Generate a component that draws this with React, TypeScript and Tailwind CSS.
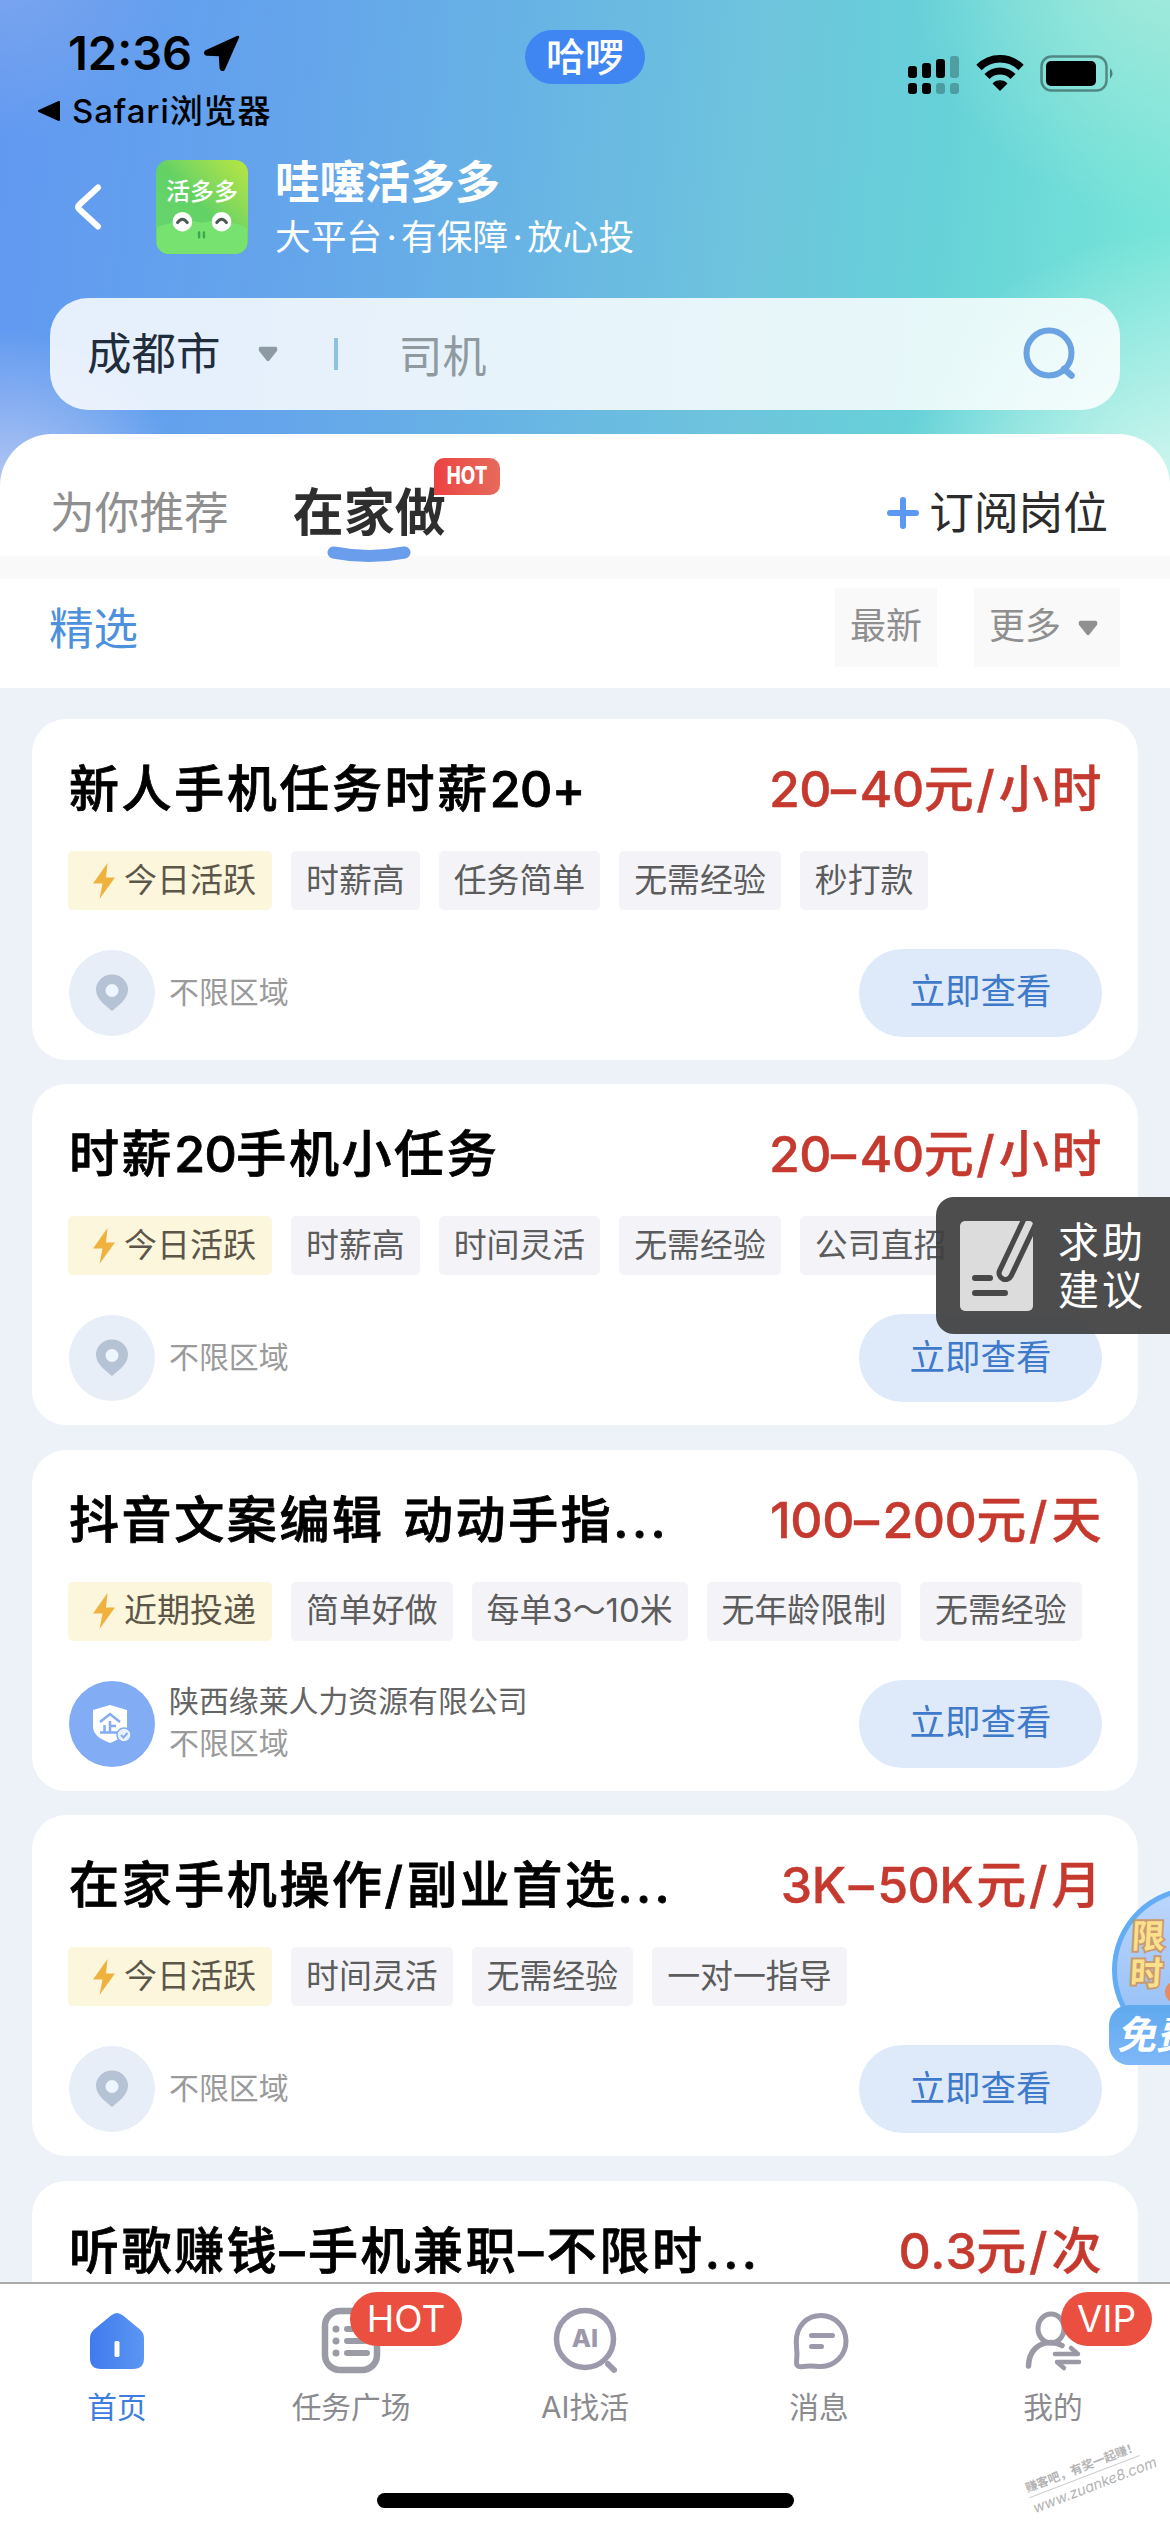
import type { ReactNode } from "react";

type Job = {
  title: string;
  pay: string;
  badge?: string;
  tags?: string[];
  company?: string;
};

const jobs: Job[] = [
  { title: "新人手机任务时薪20+", pay: "20–40元/小时", badge: "今日活跃", tags: ["时薪高", "任务简单", "无需经验", "秒打款"] },
  { title: "时薪20手机小任务", pay: "20–40元/小时", badge: "今日活跃", tags: ["时薪高", "时间灵活", "无需经验", "公司直招"] },
  {
    title: "抖音文案编辑 动动手指...",
    pay: "100–200元/天",
    badge: "近期投递",
    tags: ["简单好做", "每单3～10米", "无年龄限制", "无需经验"],
    company: "陕西缘莱人力资源有限公司",
  },
  { title: "在家手机操作/副业首选...", pay: "3K–50K元/月", badge: "今日活跃", tags: ["时间灵活", "无需经验", "一对一指导"] },
  { title: "听歌赚钱–手机兼职–不限时...", pay: "0.3元/次" },
];

// Digits sit tighter than Chinese characters; dashes, dots and spaces sit wider.
function Spaced({ text }: { text: string }) {
  const runs = text.match(/[0-9+]+|[–]|\.{3}|[ /K.]|[^0-9+–.\/ K]+/g) ?? [];
  return (
    <>
      {runs.map((run, i) => {
        let spacing = "tracking-[2.600px]";
        if (/^[0-9+]+$/.test(run)) spacing = "tracking-[-0.500px]";
        else if (run === ".") spacing = "tracking-[0px]";
        else if (run === "–") spacing = "tracking-[3.500px]";
        else if (run === "...") spacing = "tracking-[3.400px]";
        else if (run === " ") spacing = "tracking-[5px]";
        else if (run === "/") spacing = "tracking-[4px]";
        return (
          <span key={i} className={spacing}>
            {run}
          </span>
        );
      })}
    </>
  );
}

function Caret({ className }: { className: string }) {
  return (
    <svg viewBox="0 0 20 16" className={`h-[16px] w-[20px] ${className}`}>
      <path d="M2.500 2.500h15v1.500L10 13.500 2.500 4z" fill="currentColor" stroke="currentColor" strokeWidth="3.500" strokeLinejoin="round" />
    </svg>
  );
}

function StatusBar() {
  return (
    <div className="flex h-[140px] justify-between text-black">
      <div className="w-[400px] pt-[28px]">
        <div className="flex items-center pl-[68px]">
          <span className="text-[47px] leading-[50px] font-semibold">12:36</span>
          <svg viewBox="0 0 38 38" className="ml-[11px] h-[38px] w-[38px]">
            <path d="M35 3 3 17.500q-2 2 1 3L17 21l.8 13q1 3 3 1z" fill="#000" stroke="#000" strokeWidth="2.500" strokeLinejoin="round" />
          </svg>
        </div>
        <div className="mt-[11px] flex items-center pl-[37px]">
          <svg viewBox="0 0 24 22" className="h-[22px] w-[24px]">
            <path d="M2 11 22 2v18z" fill="#000" stroke="#000" strokeWidth="2" strokeLinejoin="round" />
          </svg>
          <span className="ml-[11px] text-[33px] leading-[44px] font-medium tracking-[0.900px] whitespace-nowrap">Safari浏览器</span>
        </div>
      </div>
      <div className="mt-[30px] flex h-[54px] w-[120px] items-center justify-center rounded-full bg-[#3f86f3] text-[39px] leading-[54px] font-medium text-white">
        哈啰
      </div>
      <div className="flex w-[400px] items-start justify-end pt-[54px] pr-[54px]">
        <svg viewBox="0 0 52 42" className="h-[42px] w-[52px]">
          <g fill="#000">
            <rect x="0" y="12" width="9" height="12" rx="3" />
            <rect x="14" y="9" width="9" height="15" rx="3" />
            <rect x="28" y="5" width="9" height="19" rx="3" />
            <rect x="0" y="29" width="9" height="11" rx="3" />
            <rect x="14" y="29" width="9" height="11" rx="3" />
          </g>
          <g fill="#000" opacity=".25">
            <rect x="42" y="2" width="9" height="22" rx="3" />
            <rect x="28" y="29" width="9" height="11" rx="3" />
            <rect x="42" y="29" width="9" height="11" rx="3" />
          </g>
        </svg>
        <svg viewBox="0 0 50 38" className="ml-[15px] h-[38px] w-[50px]">
          <path d="M4 13.500a29.500 29.500 0 0 1 42 0" fill="none" stroke="#000" strokeWidth="7.500" />
          <path d="M12 22.500a18 18 0 0 1 26 0" fill="none" stroke="#000" strokeWidth="7" />
          <path d="M25 37l-7.500-7.500a10.500 10.500 0 0 1 15 0z" fill="#000" />
        </svg>
        <svg viewBox="0 0 76 38" className="ml-[15px] h-[38px] w-[76px]">
          <rect x="1.500" y="2.500" width="65" height="34" rx="10" fill="none" stroke="#000" strokeOpacity=".4" strokeWidth="2.500" />
          <rect x="6" y="7" width="50" height="25" rx="5" fill="#000" />
          <path d="M70 14q5 5.500 0 11z" fill="#000" fillOpacity=".45" />
        </svg>
      </div>
    </div>
  );
}

function AppLogo() {
  return (
    <div className="flex h-[94px] w-[92px] flex-col items-center overflow-hidden rounded-[13px] bg-linear-to-bl from-[#b9e63e] via-[#62d265] to-[#68d672]">
      <div className="mt-[18px] text-[24px] leading-[28px] font-medium whitespace-nowrap text-white">活多多</div>
      <svg viewBox="0 0 92 49" className="h-[48px] w-[92px]">
        <path d="M0 22q24-10 46-5 22-5 46 5v27H0z" fill="#77e26f" />
        <circle cx="26" cy="16" r="10" fill="#fff" />
        <circle cx="66" cy="16" r="10" fill="#fff" />
        <path d="M21 17q5-7 10 0M61 17q5-7 10 0" fill="none" stroke="#4a5a52" strokeWidth="3" strokeLinecap="round" />
        <path d="M43 27v5M48 27v5" stroke="#3da552" strokeWidth="2.500" strokeLinecap="round" />
      </svg>
    </div>
  );
}

function Brand() {
  return (
    <div className="flex h-[158px] items-start pt-[20px] pl-[72px] text-white">
      <svg viewBox="0 0 30 48" className="mt-[23px] h-[48px] w-[30px]">
        <path d="M26 4.500 7 22q-2 2 0 4l19 17.500" fill="none" stroke="#fff" strokeWidth="6" strokeLinecap="round" />
      </svg>
      <div className="ml-[54px]">
        <AppLogo />
      </div>
      <div className="-mt-[4px] ml-[27px]">
        <div className="text-[45px] leading-[54px] font-bold">哇噻活多多</div>
        <div className="flex pt-[1px] text-[35.700px] leading-[52px] whitespace-nowrap">
          <span>大平台</span>
          <span className="w-[19px] text-center">·</span>
          <span>有保障</span>
          <span className="w-[19px] text-center">·</span>
          <span>放心投</span>
        </div>
      </div>
    </div>
  );
}

function SearchBar() {
  return (
    <div className="mx-[50px] flex h-[112px] items-center rounded-[38px] bg-white/84 pr-[44px] pl-[37px]">
      <span className="text-[44.500px] leading-[60px] text-[#1f2d3d]">成都市</span>
      <Caret className="ml-[37px] text-[#8d9aa3]" />
      <span className="ml-[56px] h-[32px] w-[4px] bg-[#8ec0e0]" />
      <span className="mt-[6px] ml-[61px] flex-1 text-[44px] leading-[60px] text-[#8f9aa0]">司机</span>
      <svg viewBox="0 0 54 54" className="h-[54px] w-[54px]">
        <circle cx="27" cy="26" r="22.500" fill="none" stroke="#6aa2e2" strokeWidth="6" />
        <path d="M42 42l7.500 6.500" stroke="#6aa2e2" strokeWidth="6.500" strokeLinecap="round" />
      </svg>
    </div>
  );
}

function Tabs() {
  return (
    <div className="flex h-[122px] items-center pr-[62px] pl-[50px]">
      <span className="mt-[35px] text-[44.700px] leading-[60px] text-[#8f8f8f]">为你推荐</span>
      <div className="relative mt-[35px] ml-[64px]">
        <span className="text-[51px] leading-[60px] font-bold text-[#2e2e2e]">在家做</span>
        <div className="absolute top-[-25px] left-[141px] flex h-[37px] w-[66px] items-center justify-center rounded-[10px] rounded-bl-none bg-linear-to-r from-[#ec4141] to-[#e66a5c] text-[25px] font-extrabold text-white">
          <span className="scale-x-75">HOT</span>
        </div>
        <svg viewBox="0 0 84 20" className="absolute top-[62px] left-[34px] h-[20px] w-[84px]">
          <path d="M6.500 7.500q35.500 7 71 0" fill="none" stroke="#6a9dec" strokeWidth="12" strokeLinecap="round" />
        </svg>
      </div>
      <div className="mt-[35px] ml-auto flex items-center">
        <svg viewBox="0 0 32 32" className="h-[32px] w-[32px]">
          <path d="M16 3v26M3 16h26" stroke="#5b98f2" strokeWidth="6" strokeLinecap="round" />
        </svg>
        <span className="ml-[10px] text-[44.700px] leading-[60px] text-[#2c2c2c]">订阅岗位</span>
      </div>
    </div>
  );
}

function Filters() {
  return (
    <div className="flex h-[109px] items-center pr-[50px] pl-[49px] text-[36px]">
      <span className="flex-1 pb-[9px] text-[44.500px] leading-[60px] text-[#4d90dc]">精选</span>
      <span className="mt-[-12px] flex h-[79px] w-[102px] items-center justify-center bg-[#f9f9f9] pb-[3px] text-[#8f8f8f]">最新</span>
      <span className="mt-[-12px] ml-[37px] flex h-[79px] w-[146px] items-center bg-[#f9f9f9] pl-[15px] text-[#8f8f8f]">
        <span className="pb-[3px]">更多</span>
        <Caret className="ml-[17px] text-[#909090]" />
      </span>
    </div>
  );
}

function Tag({ children }: { children: ReactNode }) {
  return (
    <span className="flex h-[59px] shrink-0 items-center rounded-[5px] bg-[#f4f4f8] px-[15px] text-[32.900px] text-[#5c5c5c]">
      <span className="pb-[2px] leading-[50px]">{children}</span>
    </span>
  );
}

function PlaceIcon() {
  return (
    <span className="ml-[1px] flex h-[86px] w-[86px] items-center justify-center rounded-full bg-[#e8eef7]">
      <svg viewBox="0 0 34 38" className="h-[38px] w-[34px]">
        <path d="M17 37C11 32 1 25 1 15.500a16 15 0 0 1 32 0C33 25 23 32 17 37z" fill="#b5c3d4" />
        <circle cx="17" cy="16.500" r="6.500" fill="#edf5ff" />
      </svg>
    </span>
  );
}

function CompanyIcon() {
  return (
    <span className="ml-[1px] flex h-[86px] w-[86px] items-center justify-center rounded-full bg-[#82acf4]">
      <svg viewBox="0 0 40 40" className="h-[40px] w-[40px]">
        <path d="M18 1 35 6v17c0 8-9 13-17 16C10 36 1 31 1 23V6z" fill="#fff" />
        <path d="M8 18 18 10l10 8M18 17v11M18 22h6M12.500 21v7M8 28.500h20" fill="none" stroke="#82acf4" strokeWidth="2.500" />
        <circle cx="32" cy="31" r="7" fill="#e9f1ff" stroke="#82acf4" strokeWidth="1.500" />
        <path d="m29 31 2.500 2.500L35.500 29" fill="none" stroke="#82acf4" strokeWidth="2" />
      </svg>
    </span>
  );
}

function JobCard({ job }: { job: Job }) {
  return (
    <article className="h-[341px] shrink-0 rounded-[34px] bg-white px-[36px] pt-[38px]">
      <div className="flex h-[64px] items-center justify-between text-[50px] leading-[64px] font-medium whitespace-nowrap">
        <h2 className="ml-[1px] text-black [-webkit-text-stroke:0.8px_#000]">
          <Spaced text={job.title} />
        </h2>
        <span className="mr-[-2px] text-[#c5392f] [-webkit-text-stroke:0.4px_#c5392f]">
          <Spaced text={job.pay} />
        </span>
      </div>
      {job.tags && (
        <>
          <div className="mt-[30px] flex gap-[19px]">
            <span className="flex h-[59px] w-[204px] shrink-0 items-center rounded-[5px] bg-[#fcf6dc] pl-[24px] text-[33px] text-[#5c5648]">
              <svg viewBox="0 0 24 38" className="h-[38px] w-[24px]">
                <path d="M15.500 1 1 21.500h9.500L7.500 37 23 15.500h-9z" fill="#efb23f" />
              </svg>
              <span className="ml-[8px] pb-[2px] leading-[50px] whitespace-nowrap">{job.badge}</span>
            </span>
            {job.tags.map((t) => (
              <Tag key={t}>{t}</Tag>
            ))}
          </div>
          <div className="mt-[39px] flex h-[88px] items-center">
            {job.company ? <CompanyIcon /> : <PlaceIcon />}
            <div className="ml-[14px] flex-1 pb-[3px] text-[29.900px] leading-[42px] text-[#9a9a9a]">
              {job.company && <div className="text-[#646464]">{job.company}</div>}
              <div>不限区域</div>
            </div>
            <button className="flex h-[88px] w-[243px] items-center justify-center rounded-full bg-[#deeafa] pb-[2px] text-[35.500px] text-[#3f79c9]">
              立即查看
            </button>
          </div>
        </>
      )}
    </article>
  );
}

function HelpFloat() {
  return (
    <div className="absolute top-[1197px] right-0 flex h-[137px] w-[234px] items-center rounded-l-[18px] bg-[#404040]/93 pl-[24px]">
      <svg viewBox="0 0 73 90" className="h-[90px] w-[73px] rounded-[4px]">
        <rect width="73" height="90" rx="5" fill="#dcdcdc" />
        <path d="M45.500 52 73-6" stroke="#484848" strokeWidth="18" strokeLinecap="round" />
        <path d="M45.500 52 71-2" stroke="#dcdcdc" strokeWidth="7.500" strokeLinecap="round" />
        <path d="M15 57h15M15 72h30" stroke="#484848" strokeWidth="6" strokeLinecap="round" />
      </svg>
      <div className="ml-[25px] text-[41px] leading-[48px] tracking-[3px] text-white">
        <div>求助</div>
        <div>建议</div>
      </div>
    </div>
  );
}

function PromoFloat() {
  return (
    <div className="absolute top-[1886px] right-0 h-[184px] w-[61px] overflow-hidden">
      <div className="absolute top-[1px] left-[3px] h-[166px] w-[166px] rounded-full border-[5px] border-[#62adf5] bg-linear-to-b from-[#bcd6fb] to-[#8fbcf5]" />
      <div className="absolute top-[32px] left-[22px] w-[36px] -skew-x-3 text-[33px] leading-[37px] font-bold text-[#fbe08b] [paint-order:stroke_fill] [-webkit-text-stroke:4px_#c99a72]">
        限时
      </div>
      <div className="absolute top-[95px] left-[56px] h-[22px] w-[22px] rounded-full bg-[#e58c66]" />
      <div className="absolute top-[119px] left-0 flex h-[60px] w-[120px] items-center rounded-[20px] bg-linear-to-b from-[#5fa9ee] to-[#7fb8f8] pl-[11px] text-[39px] leading-[50px] font-bold whitespace-nowrap text-white">
        <span className="-skew-x-12">免费</span>
      </div>
    </div>
  );
}

const homeIcon = (
  <svg viewBox="0 0 64 70" className="h-[70px] w-[64px]">
    <defs>
      <linearGradient id="home" x1="0" x2="1">
        <stop offset="0" stopColor="#3f7bee" />
        <stop offset="1" stopColor="#5c96f3" />
      </linearGradient>
    </defs>
    <path d="M26 9.500q6-5 12 0l17 14q4 3.500 4 9V52q0 11-11 11H16Q5 63 5 52V32.500q0-5.500 4-9z" fill="url(#home)" />
    <rect x="29.500" y="35" width="5" height="16" rx="1.500" fill="#fff" />
  </svg>
);

const squareIcon = (
  <svg viewBox="0 0 64 70" className="h-[70px] w-[64px]">
    <rect x="6" y="5" width="52" height="59" rx="15" fill="none" stroke="#9b9ba6" strokeWidth="6.500" />
    <path d="M28 23h17M28 35h17M28 47h20" stroke="#9b9ba6" strokeWidth="6" strokeLinecap="round" />
    <g fill="#9b9ba6">
      <circle cx="17" cy="23" r="3.500" />
      <circle cx="17" cy="35" r="3.500" />
      <circle cx="17" cy="47" r="3.500" />
    </g>
  </svg>
);

const aiIcon = (
  <span className="relative block h-[70px] w-[64px]">
    <svg viewBox="0 0 64 70" className="h-[70px] w-[64px]">
      <circle cx="32" cy="33" r="28.500" fill="none" stroke="#9b99ab" strokeWidth="5.500" />
      <path d="m55 58 6 6" stroke="#9b99ab" strokeWidth="6" strokeLinecap="round" />
    </svg>
    <span className="absolute inset-x-0 top-[17px] text-center text-[25px] leading-[30px] font-extrabold text-[#9b99ab]">AI</span>
  </span>
);

const messageIcon = (
  <svg viewBox="0 0 64 70" className="h-[70px] w-[64px]">
    <path
      d="M34 9.500a25 25.500 0 0 1 0 51c-5 0-8-1-12-.5l-8 .8q-5 .2-4.500-5L10 48Q9.500 42 9.300 36C9 20 20 9.500 34 9.500z"
      fill="none"
      stroke="#9b99ab"
      strokeWidth="5"
      strokeLinejoin="round"
    />
    <path d="M24.500 29.500h21M24.500 40.500h10" stroke="#9b99ab" strokeWidth="5" strokeLinecap="round" />
  </svg>
);

const userIcon = (
  <svg viewBox="0 0 64 70" className="h-[70px] w-[64px]">
    <ellipse cx="30" cy="22.500" rx="13" ry="14.500" fill="none" stroke="#9b99a6" strokeWidth="5" />
    <path d="M7.500 60C8 44 18 36.500 30 36.500q6 0 11 3" fill="none" stroke="#9b99a6" strokeWidth="5.500" strokeLinecap="round" />
    <path d="M34 48h23l-7-6M58 56H36l7 6" fill="none" stroke="#9b99a6" strokeWidth="4.500" strokeLinecap="round" strokeLinejoin="round" />
  </svg>
);

type NavItemProps = { icon: ReactNode; label: string; active?: boolean; badge?: string; badgeClass?: string };

function NavItem({ icon, label, active, badge, badgeClass = "" }: NavItemProps) {
  return (
    <div className="relative flex flex-1 flex-col items-center pt-[22px]">
      {icon}
      <span className={`mt-[9px] text-[29.700px] leading-[44px] ${active ? "text-[#3c7de0]" : "text-[#8b8b8f]"}`}>{label}</span>
      {badge && (
        <span
          className={`absolute top-[8px] flex h-[54px] items-center justify-center rounded-full bg-[#ea4f3f] text-[37px] leading-[54px] text-white ${badgeClass}`}
        >
          {badge}
        </span>
      )}
    </div>
  );
}

function BottomNav() {
  return (
    <nav className="relative flex h-[250px] shrink-0 flex-col border-t-2 border-[#a9a9a9] bg-white">
      <div className="flex h-[200px]">
        <NavItem icon={homeIcon} label="首页" active />
        <NavItem icon={squareIcon} label="任务广场" badge="HOT" badgeClass="left-[116px] w-[112px]" />
        <NavItem icon={aiIcon} label="AI找活" />
        <NavItem icon={messageIcon} label="消息" />
        <NavItem icon={userIcon} label="我的" badge="VIP" badgeClass="left-[125px] w-[91px]" />
      </div>
      <div className="mx-auto mt-[9px] h-[15px] w-[417px] rounded-full bg-black" />
      <div className="absolute top-[174px] left-[1026px] w-[118px] -rotate-[21deg] text-center text-[#b3b3b3]">
        <div className="border-b border-[#cfcfcf] text-[12px] leading-[18px] font-bold whitespace-nowrap">赚客吧，有奖一起赚！</div>
        <div className="pt-[1px] text-[14.500px] leading-[20px] italic">www.zuanke8.com</div>
      </div>
    </nav>
  );
}

export default function App() {
  return (
    <div className="relative flex h-[2532px] w-[1170px] flex-col overflow-hidden bg-[#edf2f9] font-['Inter','Noto_Sans_CJK_SC',sans-serif]">
      <div className="shrink-0 bg-[radial-gradient(circle_at_0px_520px,#c5d0f4_0px,#c5d0f400_190px),radial-gradient(circle_at_1180px_520px,#dcf8f2_0px,#dcf8f200_290px),radial-gradient(circle_at_1170px_-40px,#a5eadb_0px,#a5eadb00_260px),radial-gradient(circle_at_0px_-40px,#7ea6ee_0px,#7ea6ee00_180px),linear-gradient(95deg,#6199f1_0%,#64a3ec_22%,#67b2e5_42%,#6ec4dd_62%,#66d2d8_78%,#74e3d8_94%,#7ce6dc_100%)]">
        <StatusBar />
        <Brand />
        <SearchBar />
        <div className="mt-[24px] rounded-t-[52px] bg-white">
          <Tabs />
          <div className="h-[23px] bg-[#f9f9f9]" />
          <Filters />
        </div>
      </div>
      <main className="flex min-h-0 flex-1 flex-col gap-[24.400px] overflow-hidden px-[32px] pt-[31px]">
        {jobs.map((job) => (
          <JobCard key={job.title} job={job} />
        ))}
      </main>
      <BottomNav />
      <HelpFloat />
      <PromoFloat />
    </div>
  );
}
